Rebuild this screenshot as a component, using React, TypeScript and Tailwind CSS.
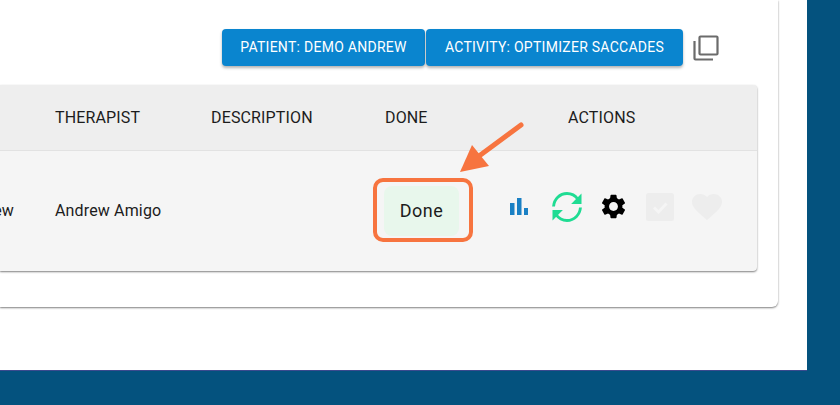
const font = { fontFamily: "Roboto, 'Liberation Sans', sans-serif" };

function Bars() {
  return (
    <svg width="18" height="17" viewBox="0 0 18 17" fill="#1a80c4">
      <rect x="0" y="5" width="4.500" height="12" />
      <rect x="7" y="0" width="4.500" height="17" />
      <rect x="14" y="10" width="4" height="7" />
    </svg>
  );
}

function Sync() {
  return (
    <svg width="30" height="30" viewBox="1.500 1.500 29 29" fill="none" stroke="#1fdc93" strokeWidth="2.800">
      <path d="M3 15.500C3.500 8.500 9 3 16 3c4.500 0 8 2 10.500 5.500" />
      <path d="M29 16.500c-.5 7-6 12.500-13 12.500-4.500 0-8-2-10.500-5.500" />
      <path d="M30 3v10H20z" fill="#1fdc93" stroke="none" />
      <path d="M2 29V19h10z" fill="#1fdc93" stroke="none" />
    </svg>
  );
}

function Gear() {
  return (
    <svg width="23" height="25" viewBox="2.700 2 18.600 20" fill="#000">
      <path d="M19.14 12.94c.04-.3.06-.61.06-.94 0-.32-.02-.64-.07-.94l2.030-1.580a.49.49 0 0 0 .12-.61l-1.920-3.320a.488.488 0 0 0-.59-.22l-2.390.96c-.5-.38-1.030-.7-1.620-.94l-.36-2.540a.484.484 0 0 0-.48-.41h-3.840c-.24 0-.43.17-.47.41l-.36 2.540c-.59.24-1.130.57-1.620.94l-2.390-.96c-.22-.08-.47 0-.59.22L2.740 8.870c-.12.21-.08.47.12.61l2.030 1.580c-.05.3-.09.63-.09.94s.02.64.07.94l-2.030 1.580a.49.49 0 0 0-.12.61l1.920 3.320c.12.22.37.29.59.22l2.390-.96c.5.38 1.030.7 1.620.94l.36 2.540c.05.24.24.41.48.41h3.840c.24 0 .44-.17.47-.41l.36-2.540c.59-.24 1.130-.56 1.620-.94l2.390.96c.22.08.47 0 .59-.22l1.920-3.320c.12-.22.07-.47-.12-.61l-2.010-1.580zM12 15.600c-1.980 0-3.600-1.620-3.600-3.600s1.620-3.600 3.600-3.600 3.600 1.620 3.600 3.600-1.620 3.600-3.600 3.600z" />
    </svg>
  );
}

function CheckBox() {
  return (
    <svg width="28" height="28" viewBox="0 0 28 28">
      <rect width="28" height="28" rx="2.500" fill="#ededed" />
      <path d="M8 14.500l4.500 4.500 8-8.500" fill="none" stroke="#f5f5f5" strokeWidth="2.800" />
    </svg>
  );
}

function Heart() {
  return (
    <svg width="30" height="26" viewBox="2 3 20 18.350" fill="#ededed" preserveAspectRatio="none">
      <path d="M12 21.350l-1.450-1.320C5.400 15.360 2 12.280 2 8.500 2 5.420 4.420 3 7.500 3c1.740 0 3.410.81 4.500 2.090C13.090 3.810 14.760 3 16.500 3 19.580 3 22 5.420 22 8.500c0 3.780-3.400 6.860-8.550 11.540L12 21.350z" />
    </svg>
  );
}

function Copy() {
  return (
    <svg width="26" height="26" viewBox="0 0 26 26" fill="none" stroke="#6b6b6b" strokeWidth="2.200">
      <rect x="6.500" y="1.500" width="18" height="18" rx="1" />
      <path d="M1.500 6v17.500a1 1 0 0 0 1 1H20" />
    </svg>
  );
}

function Btn({ label, w }: { label: string; w: string }) {
  return (
    <div className={`${w} flex h-[37px] items-center justify-center rounded-[4px] bg-[#0a85cf] text-[14px] tracking-[0.27px] text-white shadow-[0_2px_3px_rgba(0,0,0,0.3)]`}>
      {label}
    </div>
  );
}

export default function App() {
  return (
    <div style={font} className="relative h-[405px] w-[840px] overflow-hidden bg-[#04527e] text-[#1c1c1c]">
      <div className="h-[370px] w-[807px] bg-white shadow-[0_1px_0_#3b4a8f]">
        <div className="flex h-[307px] w-[778px] flex-col rounded-br-md bg-white pt-[29px] shadow-[0_1px_2px_rgba(0,0,0,0.5)]">
          <div className="flex h-[37px] items-center pl-[222px]">
            <Btn label="PATIENT: DEMO ANDREW" w="w-[203px]" />
            <div className="w-px" />
            <Btn label="ACTIVITY: OPTIMIZER SACCADES" w="w-[257px]" />
            <div className="ml-[10px] mt-[1px]"><Copy /></div>
          </div>
          <div className="mt-[19px] flex h-[186px] w-[757px] flex-col overflow-hidden rounded-r-sm bg-[#f5f5f5] shadow-[0_1px_2px_rgba(0,0,0,0.5)]">
            <div className="flex h-[66px] items-center border-b border-[#e2e2e2] bg-[#eeeeee] text-[16px] tracking-[0.15px]">
              <div className="w-[55px]" />
              <div className="w-[156px]">THERAPIST</div>
              <div className="w-[174px]">DESCRIPTION</div>
              <div className="w-[183px]">DONE</div>
              <div>ACTIONS</div>
            </div>
            <div className="flex flex-1 items-center text-[16px] tracking-[0.15px]">
              <div className="flex w-[55px] justify-end overflow-hidden pr-[41px] whitespace-nowrap">Demo Andrew</div>
              <div className="w-[329px]">Andrew Amigo</div>
              <div className="w-[126px]">
                <div className="flex h-[50px] w-[75px] items-center justify-center rounded-lg bg-[#e8f7ec] pb-[1px] text-[18px] tracking-[0.5px]">Done</div>
              </div>
              <div className="mb-[9px] flex items-center">
                <Bars />
                <div className="ml-[24px]"><Sync /></div>
                <div className="ml-[20px]"><Gear /></div>
                <div className="ml-[21px]"><CheckBox /></div>
                <div className="ml-[18px]"><Heart /></div>
              </div>
            </div>
          </div>
        </div>
      </div>
      <div className="absolute left-[373px] top-[178px] h-[64px] w-[100px] rounded-[10px] border-[4px] border-[#f7743f]" />
      <svg className="absolute left-[455px] top-[118px]" width="75" height="60" viewBox="0 0 75 60">
        <path d="M66 7L20 41" stroke="#f7743f" strokeWidth="5" strokeLinecap="round" fill="none" />
        <path d="M5 54L17 27l17 21z" fill="#f7743f" />
      </svg>
    </div>
  );
}
